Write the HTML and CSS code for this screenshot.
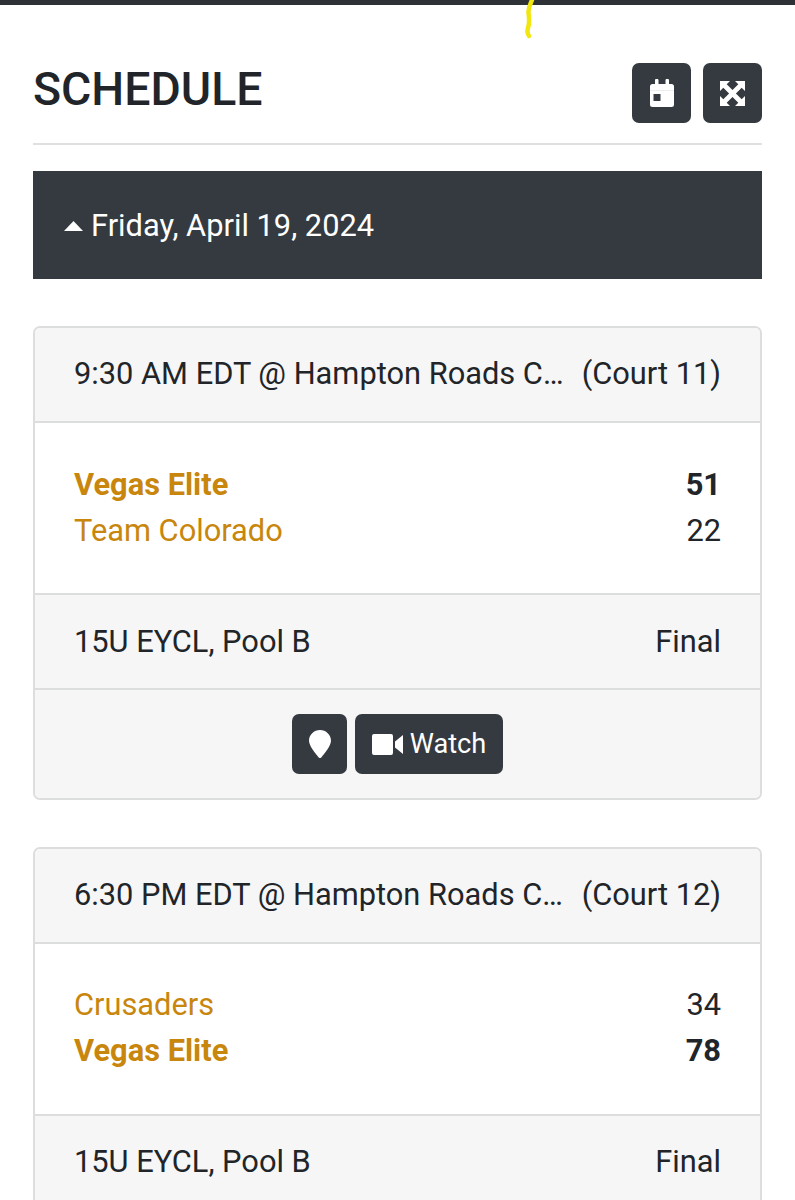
FILE: index.html
```html
<!DOCTYPE html>
<html lang="en">
<head>
<meta charset="utf-8">
<title>Schedule</title>
<link rel="stylesheet" href="styles.css">
</head>
<body>
<div class="topbar"></div>
<svg class="scribble" width="14" height="40" viewBox="0 0 14 40"><path d="M10 0C8 5 6 8 6.500 13C7 18 8 22 6 28C5 31 5.500 34 7 36" fill="none" stroke="#f2e60f" stroke-width="4.500" stroke-linecap="round"/></svg>
<main class="page">
  <header class="head">
    <h1 class="title">SCHEDULE</h1>
    <div class="head-actions">
      <button class="btn btn-square">
        <svg width="24" height="28" viewBox="0 0 24 28"><path fill="#fff" fill-rule="evenodd" d="M5 1.500a1.500 1.500 0 0 1 3.500 0V5h7V1.500a1.500 1.500 0 0 1 3.500 0V5h2.500A2.500 2.500 0 0 1 24 7.500v18a2.500 2.500 0 0 1-2.500 2.500h-19A2.500 2.500 0 0 1 0 25.500v-18A2.500 2.500 0 0 1 2.500 5H5zM3.500 15v7h7v-7z"/><path stroke="#eceded" d="M0 11.500h24"/></svg>
      </button>
      <button class="btn btn-square">
        <svg width="25" height="25" viewBox="0 0 25 25"><path fill="#fff" d="M0 0H10L6.700 3.300 12.500 9.100 18.300 3.300 15 0H25V10L21.700 6.700 15.900 12.500 21.700 18.300 25 15V25H15L18.300 21.700 12.500 15.900 6.700 21.700 10 25H0V15L3.300 18.300 9.100 12.500 3.300 6.700 0 10Z"/></svg>
      </button>
    </div>
  </header>
  <div class="day">
    <svg class="caret" width="19" height="10" viewBox="0 0 19 10"><path fill="#fff" d="M9.500 0 19 10H0z"/></svg>
    <span>Friday, April 19, 2024</span>
  </div>

  <section class="card">
    <div class="row row-top">
      <span class="venue">9:30 AM EDT @ Hampton Roads Convention Center</span>
      <span class="court">(Court 11)</span>
    </div>
    <div class="teams">
      <div class="team win"><a class="name">Vegas Elite</a><span class="score">51</span></div>
      <div class="team"><a class="name">Team Colorado</a><span class="score">22</span></div>
    </div>
    <div class="row"><span>15U EYCL, Pool B</span><span>Final</span></div>
    <div class="actions">
      <button class="btn btn-pin">
        <svg width="22" height="28" viewBox="0 0 22 28"><path fill="#fff" d="M11 0C5 0 0 4.800 0 10.800 0 16 7 24 9.500 27.200a2 2 0 0 0 3 0C15 24 22 16 22 10.800 22 4.800 17 0 11 0z"/></svg>
      </button>
      <button class="btn btn-watch">
        <svg width="31" height="21" viewBox="0 0 31 21"><path fill="#fff" d="M2 0h17a2 2 0 0 1 2 2v17a2 2 0 0 1-2 2H2a2 2 0 0 1-2-2V2a2 2 0 0 1 2-2zM23 7.500 31 1v19l-8-6.500z"/></svg>
        <span>Watch</span>
      </button>
    </div>
  </section>

  <section class="card card-next">
    <div class="row row-top">
      <span class="venue">6:30 PM EDT @ Hampton Roads Convention Center</span>
      <span class="court">(Court 12)</span>
    </div>
    <div class="teams">
      <div class="team"><a class="name">Crusaders</a><span class="score">34</span></div>
      <div class="team win"><a class="name">Vegas Elite</a><span class="score">78</span></div>
    </div>
    <div class="row"><span>15U EYCL, Pool B</span><span>Final</span></div>
  </section>
</main>
</body>
</html>
```
FILE: styles.css
```css
* { box-sizing: border-box; }
html, body { margin: 0; height: 1200px; overflow: hidden; }
body {
  background: #fff;
  color: #212529;
  font-family: Roboto, "Liberation Sans", sans-serif;
  font-size: 30.8px;
  line-height: 46px;
  position: relative;
}
.topbar { height: 5px; background: #2e3136; }
.scribble { position: absolute; left: 522px; top: 0; }
.page { padding: 0 33px; }
.head {
  display: flex;
  justify-content: space-between;
  align-items: flex-start;
  height: 140px;
  padding-top: 58px;
  border-bottom: 2px solid #dee0e2;
}
.title { margin: 0; font-size: 46.4px; font-weight: 500; line-height: 52px; }
.head-actions { display: flex; gap: 12px; }
.btn {
  display: inline-flex;
  align-items: center;
  justify-content: center;
  border: 0;
  padding: 0;
  height: 60px;
  border-radius: 7px;
  background: #343a40;
  color: #fff;
  font: inherit;
}
.btn-square { width: 59px; }
.day {
  display: flex;
  align-items: center;
  gap: 8px;
  height: 108px;
  margin-top: 26px;
  padding: 1px 0 0 31px;
  background: #343a40;
  color: #fff;
}
.caret { flex: none; }
.card {
  margin-top: 47px;
  border: 2px solid #dcdddd;
  border-radius: 7px;
  overflow: hidden;
}
.row {
  display: flex;
  justify-content: space-between;
  height: 93px;
  padding: 24px 39px 0;
  background: #f6f6f6;
  gap: 16px;
}
.venue { overflow: hidden; white-space: nowrap; text-overflow: ellipsis; min-width: 0; }
.court { flex: none; }
.row-top { height: 95px; padding-top: 23px; border-bottom: 2px solid #dcdddd; }
.teams {
  height: 172px;
  padding: 39px 39px 0;
  background: #fff;
  border-bottom: 2px solid #dcdddd;
}
.card-next .teams { padding-top: 38px; }
.card-next .row { padding-top: 23px; }
.team { display: flex; justify-content: space-between; }
.name { color: #c8860d; }
.win { font-weight: 700; }
.actions {
  display: flex;
  justify-content: center;
  gap: 8px;
  height: 110px;
  padding-top: 24px;
  background: #f6f6f6;
  border-top: 2px solid #dcdddd;
}
.btn-pin { width: 55px; }
.btn-watch { width: 148px; gap: 7px; font-size: 27.2px; }
```
